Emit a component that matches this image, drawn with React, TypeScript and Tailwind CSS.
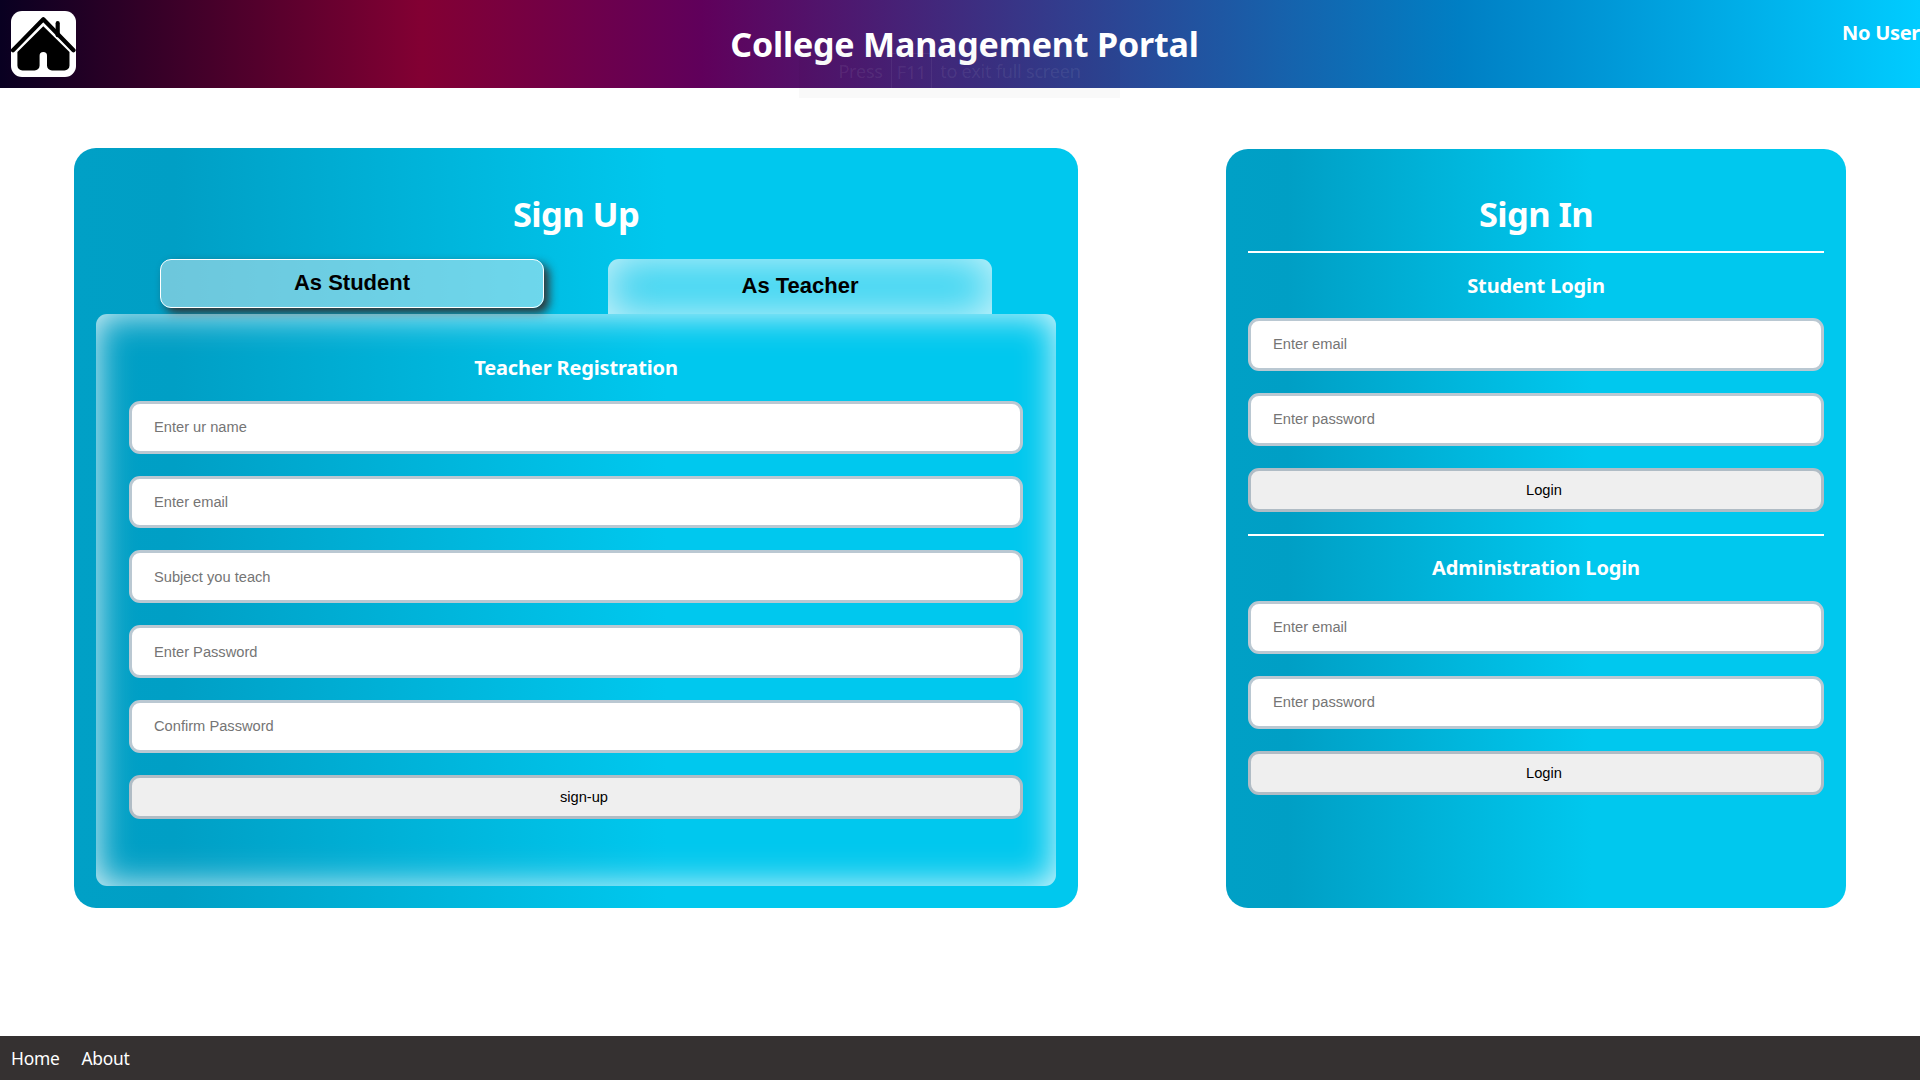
import React from "react";

const cardBg =
  "rounded-[22px] bg-[linear-gradient(90deg,#00a0c6_0%,#009fc5_10%,#00c8ee_59%,#00c8ee_100%)]";

function Heading({ children }: { children: React.ReactNode }) {
  return (
    <h2 className="pb-[1px] text-center text-[34.5px] leading-[43px] font-bold tracking-[-0.6px] text-white">{children}</h2>
  );
}

function Sub({ children, className = "" }: { children: React.ReactNode; className?: string }) {
  return (
    <h3 className={`text-center text-[20px] leading-[26px] font-bold tracking-[-0.15px] text-white ${className}`}>
      {children}
    </h3>
  );
}

const fieldBase =
  "block w-full rounded-[11px] border-[3px] px-[22px] font-['Liberation_Sans',sans-serif] text-[14.67px]";

function Field({ label, type = "text" }: { label: string; type?: string }) {
  return (
    <input
      type={type}
      placeholder={label}
      className={`${fieldBase} h-[52.75px] border-[#bac8d2] bg-white placeholder:text-[#757575]`}
    />
  );
}

function Submit({ label }: { label: string }) {
  return (
    <button className={`${fieldBase} h-[44px] border-[#b0bcc5] bg-[#efefef] pr-[6px] text-center text-black`}>
      {label}
    </button>
  );
}

function HomeIcon() {
  return (
    <div className="h-[66px] w-[65px] overflow-hidden rounded-[11px] bg-white">
      <svg viewBox="0 0 65 66" className="h-full w-full">
        <path d="M2 39.300 32.300 8.300 62.500 39.300" fill="none" stroke="#000" strokeWidth="4.2" strokeLinecap="round" strokeLinejoin="round" />
        <path d="M46.700 12.200v12" stroke="#000" strokeWidth="4.2" strokeLinecap="round" />
        <path d="M32.300 15.300 58.500 41v13.500a5 5 0 0 1-5 5H41a5 5 0 0 1-5-5V44.800a3.700 3.700 0 0 0-7.400 0v9.700a5 5 0 0 1-5 5H11.400a5 5 0 0 1-5-5V41Z" />
      </svg>
    </div>
  );
}

export default function App() {
  return (
    <div className="flex h-[1080px] w-[1920px] flex-col overflow-hidden bg-white font-['Noto_Sans',sans-serif]">
      <header className="relative grid h-[88px] shrink-0 grid-cols-[1fr_auto_1fr] bg-[linear-gradient(90deg,#090021_0%,#830033_22%,#60005b_36.5%,#007fc4_76%,#00ccff_100%)] text-white">
        <div className="pt-[11px] pl-[11px]">
          <HomeIcon />
        </div>
        <h1 className="ml-[9px] pt-[22px] text-[34px] leading-[44px] font-bold tracking-[-0.18px] whitespace-nowrap">
          College Management Portal
        </h1>
        <div className="flex justify-end pt-[19px] text-[20px] leading-[28px] font-bold tracking-[-0.3px] whitespace-nowrap">
          No User
        </div>
        <div className="absolute top-[50px] left-[799px] flex h-[48px] w-[321px] justify-center gap-[8px] bg-black/[0.025] pt-[3px] text-[18px] leading-[36px] tracking-[-0.2px] text-white/[0.08]">
          <span>Press</span>
          <span className="h-[37px] rounded-[2px] border border-white/[0.06] px-[5px]">F11</span>
          <span>to exit full screen</span>
        </div>
      </header>

      <main className="flex flex-1 items-start pt-[60px] pl-[74px]">
        <section className={`${cardBg} h-[760px] w-[1004px] px-[22px] pt-[44px]`}>
          <Heading>Sign Up</Heading>
          <div className="mt-[23px] flex h-[55px] gap-[64px] px-[64px] font-['Liberation_Sans',sans-serif] text-[22px] font-bold text-black">
            <button className="h-[49px] w-[384px] rounded-[11px] border border-white bg-[#d9eff4]/50 pb-[2px] shadow-[5px_5px_10px_#333]">
              As Student
            </button>
            <button className="h-[55px] w-[384px] rounded-t-[11px] bg-white/20 pb-[2px] shadow-[inset_0_0_44px_rgba(255,255,255,0.8)]">
              As Teacher
            </button>
          </div>
          <div className="relative h-[572px] rounded-[11px] px-[33px] pt-[41px] shadow-[inset_0_0_35px_rgba(255,255,255,0.9)]">
            <Sub>Teacher Registration</Sub>
            <form className="mt-[19.9px] flex flex-col gap-[22px]">
              <Field label="Enter ur name" />
              <Field label="Enter email" />
              <Field label="Subject you teach" />
              <Field label="Enter Password" type="password" />
              <Field label="Confirm Password" type="password" />
              <Submit label="sign-up" />
            </form>
          </div>
        </section>

        <section className={`${cardBg} mt-[1px] ml-[148px] h-[759px] w-[620px] px-[22px] pt-[43px]`}>
          <Heading>Sign In</Heading>
          <div className="mt-[15px] h-[2px] bg-white" />
          <Sub className="mt-[20px]">Student Login</Sub>
          <form className="mt-[19.1px] flex flex-col gap-[22px]">
            <Field label="Enter email" />
            <Field label="Enter password" type="password" />
            <Submit label="Login" />
          </form>
          <div className="mt-[22.4px] h-[2px] bg-white" />
          <Sub className="mt-[19px]">Administration Login</Sub>
          <form className="mt-[20.1px] flex flex-col gap-[22px]">
            <Field label="Enter email" />
            <Field label="Enter password" type="password" />
            <Submit label="Login" />
          </form>
        </section>
      </main>

      <footer className="flex h-[44px] shrink-0 items-center gap-[22px] bg-[#353131] px-[11px] pt-[1px] text-[17.4px] tracking-[-0.25px] text-white">
        <a>Home</a>
        <a>About</a>
      </footer>
    </div>
  );
}
